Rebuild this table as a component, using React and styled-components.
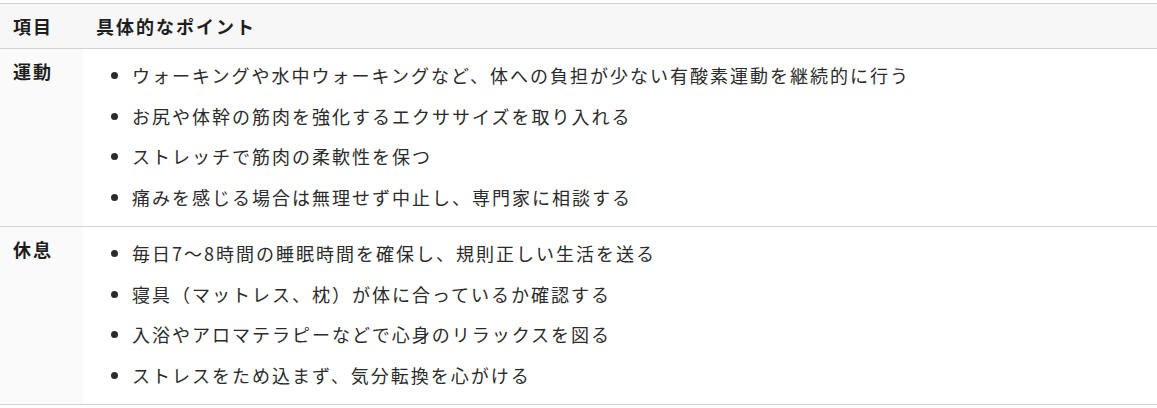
import React from "react";
import styled, { createGlobalStyle } from "styled-components";

const GlobalStyle = createGlobalStyle`
  html, body {
    margin: 0;
    padding: 0;
    background: #ffffff;
  }
  body {
    font-family: "Noto Sans CJK JP", "Noto Sans", sans-serif;
    color: #2b2b2b;
  }
`;

const Wrapper = styled.div`
  padding-top: 3px;
`;

const Table = styled.table`
  width: 100%;
  border-collapse: collapse;
  font-size: 18px;
  line-height: 26px;
  letter-spacing: 2px;
`;

const HeadCell = styled.th`
  text-align: left;
  font-weight: 700;
  color: #1e1e1e;
  padding: 9px 13px;
  background: #f7f7f7;
  border-top: 1px solid #d2d2d2;
  border-bottom: 1px solid #d2d2d2;
  width: ${(p) => (p.$narrow ? "57px" : "auto")};
`;

const Row = styled.tr`
  border-bottom: 1px solid #d2d2d2;
`;

const LabelCell = styled.td`
  vertical-align: top;
  font-weight: 700;
  color: #1e1e1e;
  padding: 9px 13px;
  background: #fafafa;
`;

const BodyCell = styled.td`
  vertical-align: top;
  padding: 9px 13px;
`;

const List = styled.ul`
  margin: 0;
  padding: 4px 0 7.5px 36px;
  list-style: disc;
`;

const Item = styled.li`
  & + & {
    margin-top: 14.5px;
  }
`;

const rows = [
  {
    label: "運動",
    points: [
      "ウォーキングや水中ウォーキングなど、体への負担が少ない有酸素運動を継続的に行う",
      "お尻や体幹の筋肉を強化するエクササイズを取り入れる",
      "ストレッチで筋肉の柔軟性を保つ",
      "痛みを感じる場合は無理せず中止し、専門家に相談する",
    ],
  },
  {
    label: "休息",
    points: [
      "毎日7〜8時間の睡眠時間を確保し、規則正しい生活を送る",
      "寝具（マットレス、枕）が体に合っているか確認する",
      "入浴やアロマテラピーなどで心身のリラックスを図る",
      "ストレスをため込まず、気分転換を心がける",
    ],
  },
];

export default function App() {
  return (
    <Wrapper>
      <GlobalStyle />
      <Table>
        <thead>
          <tr>
            <HeadCell $narrow>項目</HeadCell>
            <HeadCell>具体的なポイント</HeadCell>
          </tr>
        </thead>
        <tbody>
          {rows.map((r) => (
            <Row key={r.label}>
              <LabelCell>{r.label}</LabelCell>
              <BodyCell>
                <List>
                  {r.points.map((p) => (
                    <Item key={p}>{p}</Item>
                  ))}
                </List>
              </BodyCell>
            </Row>
          ))}
        </tbody>
      </Table>
    </Wrapper>
  );
}
